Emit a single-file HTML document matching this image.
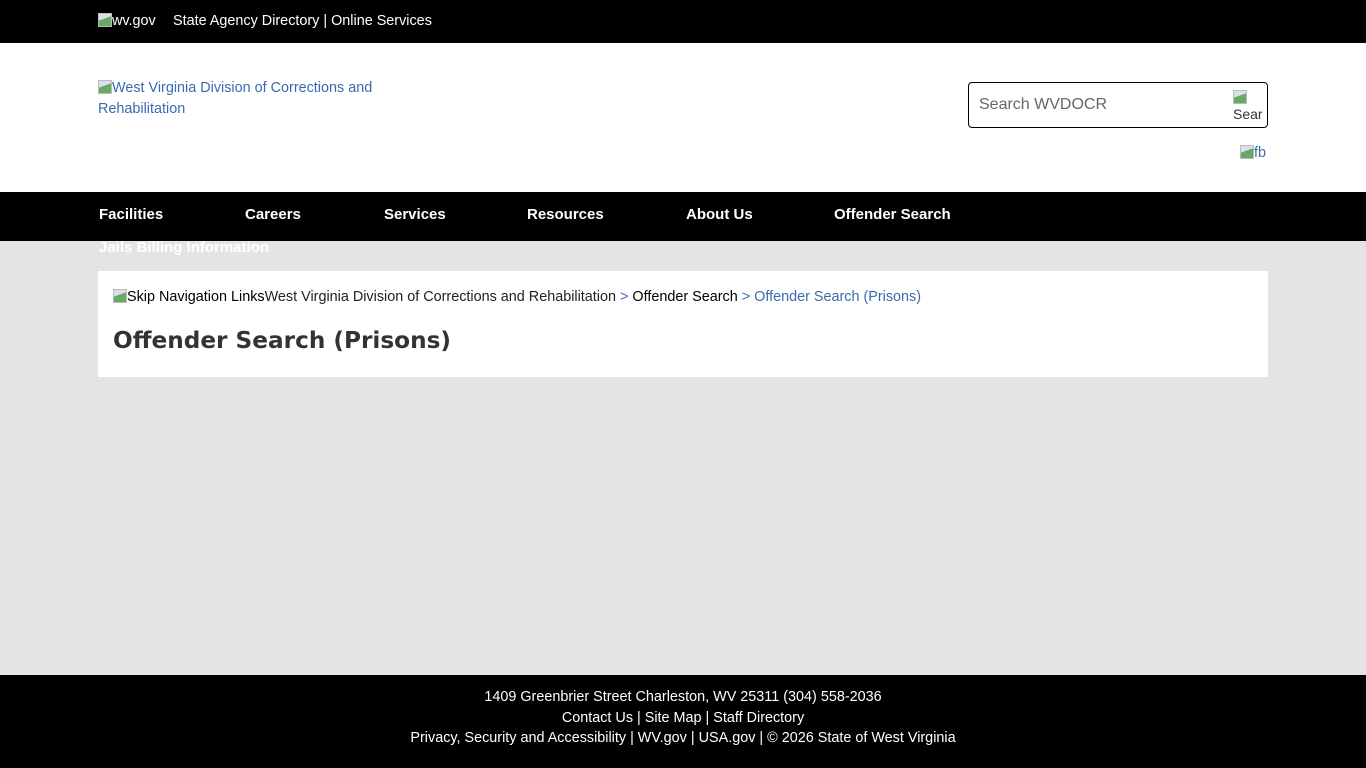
<!DOCTYPE html>
<html><head><meta charset="utf-8"><style>
*{margin:0;padding:0;box-sizing:border-box}
body{width:1366px;height:768px;background:#e4e4e4;font-family:"Liberation Sans",Arial,sans-serif;font-size:14.4px;position:relative;overflow:hidden}
.a{position:absolute;white-space:nowrap}
.top{position:absolute;left:0;top:0;width:1366px;height:43px;background:#000;color:#fff}
.hdr{position:absolute;left:0;top:43px;width:1366px;height:149px;background:#fff}
.nav{position:absolute;left:0;top:192px;width:1366px;height:49px;background:#000;color:#fff;font-weight:bold;font-size:15px}
.card{position:absolute;left:98px;top:271px;width:1170px;height:106px;background:#fff}
.foot{position:absolute;left:0;top:675px;width:1366px;height:93px;background:#000;color:#fff;text-align:center;font-size:14.4px}
.ic{display:inline-block;width:14px;height:14px;background:linear-gradient(160deg,#dde 40%,#6a6 41%);vertical-align:-2px;border:1px solid #bbb}
</style></head><body>
<div class="top"><div class="a" style="left:98px;top:13px"><span class="ic"></span>wv.gov</div><div class="a" style="left:173px;top:13px">State Agency Directory | Online Services</div></div>
<div class="hdr">
<div class="a" style="left:98px;top:35px;color:#3a6bb0;line-height:21px"><span class="ic"></span>West Virginia Division of Corrections and<br>Rehabilitation</div>
<div class="a" style="left:968px;top:39px;width:300px;height:46px;border:1px solid #000;border-radius:4px"><span class="a" style="left:10px;top:13px;font-size:16px;color:#666">Search WVDOCR</span><span class="a" style="left:264px;top:6px;font-size:14px;color:#333;width:30px;overflow:hidden;line-height:17px"><span class="ic"></span><br>Sear</span></div>
<div class="a" style="left:1240px;top:102px;color:#3a6bb0"><span class="ic"></span>fb</div>
</div>
<div class="nav">
<span class="a" style="left:99px;top:14px">Facilities</span>
<span class="a" style="left:245px;top:14px">Careers</span>
<span class="a" style="left:384px;top:14px">Services</span>
<span class="a" style="left:527px;top:14px">Resources</span>
<span class="a" style="left:686px;top:14px">About Us</span>
<span class="a" style="left:834px;top:14px">Offender Search</span>
</div>
<div class="a" style="left:99px;top:239px;color:#fff;font-weight:bold;font-size:15px">Jails Billing Information</div>
<div class="card">
<div class="a" style="left:15px;top:18px"><span class="ic"></span>Skip Navigation Links<span style="color:#222">West Virginia Division of Corrections and Rehabilitation</span> <span style="color:#3a6bb0">&gt;</span> Offender Search <span style="color:#3a6bb0">&gt; Offender Search (Prisons)</span></div>
<div class="a" style="left:15px;top:56px;font-family:'DejaVu Sans',sans-serif;font-weight:bold;font-size:23.2px;color:#333">Offender Search (Prisons)</div>
</div>
<div class="foot"><div style="margin-top:12px;line-height:20.5px">1409 Greenbrier Street Charleston, WV 25311 (304) 558-2036<br>Contact Us | Site Map | Staff Directory<br>Privacy, Security and Accessibility | WV.gov | USA.gov | © 2026 State of West Virginia</div></div>
</body></html>
